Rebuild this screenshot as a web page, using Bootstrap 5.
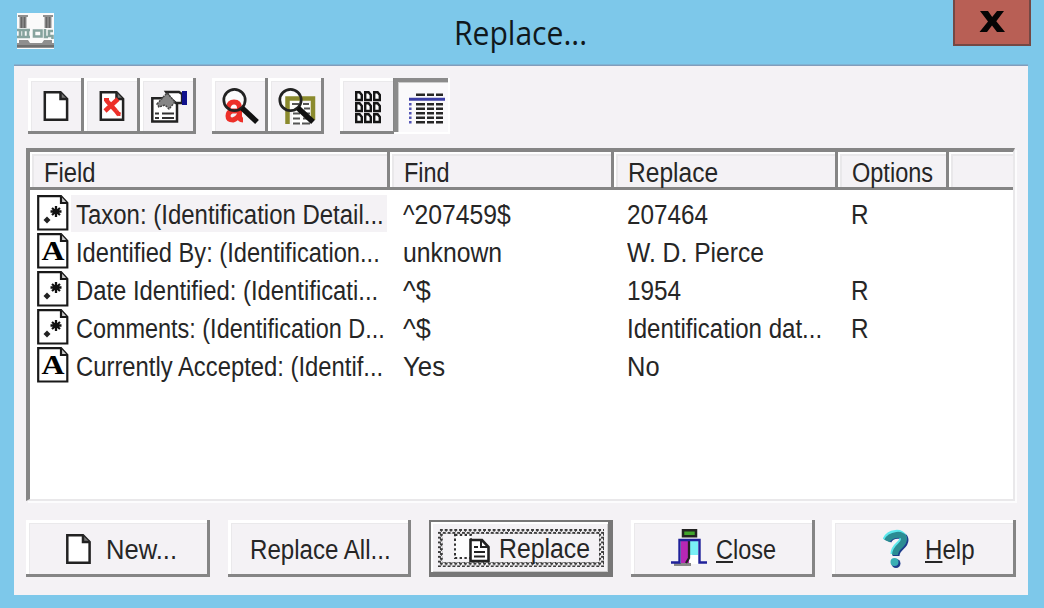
<!DOCTYPE html>
<html lang="en">
<head>
<meta charset="utf-8">
<meta name="viewport" content="width=device-width, initial-scale=1">
<title>Replace...</title>
<link href="https://cdn.jsdelivr.net/npm/bootstrap@5.3.0/dist/css/bootstrap.min.css" rel="stylesheet">
<style>
  :root { --face:#f4f2f5; --shade:#858585; --sky:#7dc8ea; }
  body { width:1044px; height:608px; overflow:hidden; background:var(--sky); font-family:"Liberation Sans",Arial,sans-serif; font-size:27px; line-height:40px; color:#262626; }
  svg { display:block; flex:none; }
  .fit { display:inline-block; white-space:nowrap; transform-origin:0 50%; }
  .fitbox { flex:none; white-space:nowrap; text-align:left; }
  .titlebar { height:66px; padding:0 13px 0 17px; }
  .logo { margin-top:13px; }
  .caption-text { font-family:"Open Sans",sans-serif; font-size:33px; line-height:44px; color:#10181c; margin:11px 0 0 400px; }
  .btn-x { width:78px; height:46px; background:#b85f55; border:2px solid #744844; border-top:0; }
  .panel { width:1014px; height:529px; margin-left:14px; background:var(--face); padding:12px 12px 0 12px; box-shadow:0 -1.5px 0 #829dbb; }
  .toolbar-row { margin-left:2px; }
  .tool, .cmd { background:var(--face); border:0; border-radius:0; padding:0; color:inherit; font-size:inherit; line-height:inherit;
    box-shadow:inset -3px -3px 0 var(--shade), inset 3px 3px 0 #fff, inset 4px 4px 0 #eae9eb; }
  .tool { width:56px; height:56px; }
  .tool.pressed { margin-left:-2px; background:#faf9fb; box-shadow:inset -2px -2px 0 #fff, inset 4px 4px 0 #8b8b8b, inset 5px 5px 0 #ccc; }
  .grid-view { width:989px; height:353px; margin-top:14px; background:#fff; border:4px solid #858585; border-right:2px solid #e9e8ea; border-bottom:2px solid #e9e8ea; box-shadow:2px 2px 0 #fcfcfd; }
  .cols { display:grid; grid-template-columns:360px 224px 224px 111px 1fr; }
  .head { margin-bottom:5px; }
  .head > div { height:38px; padding-left:14px; line-height:42px; background:var(--face); box-shadow:inset -3px -3px 0 var(--shade), inset 2px 2px 0 #fff, inset 4px 4px 0 #e9e8ea; }
  .head > div:last-child { box-shadow:inset 0 -3px 0 var(--shade), inset 2px 2px 0 #fff, inset 4px 4px 0 #e9e8ea; }
  .line > div { height:38px; padding-left:13px; }
  .line > div:first-child { padding-left:7px; }
  .name { width:316px; height:37px; margin-left:2px; padding-left:5px; }
  .name.sel { background:var(--face); }
  .cmd { width:184px; height:57px; padding-top:1px; }
  .cmd .fitbox { padding-top:2px; }
  .cmd.default { padding:9px 9px 10px; box-shadow:inset 0 0 0 2px #777, inset -5px -5px 0 #777, inset 4px 4px 0 #fff, inset -6px -6px 0 #ccc; }
  .focus-ants { width:166px; height:38px; padding:5px; background:repeating-conic-gradient(#3c3c3c 0 25%, #f4f2f5 0 50%) 0 0/4.8px 4.8px; }
  .focus-in { width:156px; height:28px; background:var(--face); }
  .cmds { gap:17.7px; margin-top:19px; }
</style>
</head>
<body>
<svg width="0" height="0" class="position-absolute">
  <defs>
    <g id="sheet"><path d="M1.300 1.300H17L23.600 8V28.700H1.300Z" fill="#fff" stroke="#222" stroke-width="2.500"/><path d="M17 1.500V8H23.500" fill="#777" stroke="#222" stroke-width="2.500"/></g>
    <g id="page"><path d="M1.200 1.200H24L30.300 8V34.500H1.200Z" fill="#fff" stroke="#191919" stroke-width="2.200"/><path d="M24 1.500V8H30" fill="#ccc" stroke="#191919" stroke-width="2.200"/></g>
    <g id="regex"><use href="#page"/><path d="M19 11V22M13.500 16.500H24.500M15 13L23 20M23 13L15 20" stroke="#111" stroke-width="2.300"/><path d="M10 21.500L13.500 25L10 28.500L6.500 25Z" fill="#222"/></g>
    <g id="lens"><circle cx="22.500" cy="22" r="10.700" fill="none" stroke="#222" stroke-width="2.700"/><path d="M30 30L45 44" stroke="#111" stroke-width="5.500"/></g>
    <g id="cell"><path d="M1.200 1.200H4.600L6.800 4V9H1.200Z" fill="#fff" stroke="#161616" stroke-width="2.400"/></g>
  </defs>
</svg>

<header class="titlebar d-flex align-items-start">
  <svg class="logo" width="37" height="36" viewBox="0 0 37 36">
    <path fill="#fafafa" d="M0 0H37V36H0z"/>
    <path fill="#8f8f8f" d="M1 2H11V4H9.500V15H2.500V4H1zM26 2H36V4H34.500V15H27.500V4H26zM2 27H11L13 30H25L27 27H35V30H37V35H0V30H2z"/>
    <path stroke="#666" stroke-width="1.500" d="M4.500 4V15M7.500 4V15M29.500 4V15M32.500 4V15M0 33H37"/>
    <path fill="none" stroke="#86a39e" stroke-width="2.600" d="M0 17H3V24H0M4 17H13M4 24H13M6.500 17V24M11 17V24M17 17.500H24.500V23.500H17ZM28 16V24H31M36 18H32V23H35.500V26"/>
  </svg>
  <div class="caption-text fitbox" data-box="133"><span class="fit" data-w="133">Replace...</span></div>
  <button class="btn-x ms-auto p-0" aria-label="Close window"><svg width="74" height="42" viewBox="0 0 74 42"><path d="M25 10H33L37.200 16L42 10H49L41.300 20.200L50 31H42L37 24.500L32 31H24.500L33 20.500Z" fill="#050505"/></svg></button>
</header>

<main class="panel">
  <div class="toolbar-row d-flex gap-3">
    <div class="d-flex">
      <button class="tool"><svg width="56" height="56"><use href="#sheet" x="15.500" y="13"/></svg></button>
      <button class="tool"><svg width="56" height="56"><use href="#sheet" x="15.500" y="13"/><path d="M22 22L32 33M34 21L21 33M32 33L35 37" stroke="#ed3029" stroke-width="4.500" fill="none"/><path d="M20 20H25V23H20zM35 34H36.500V38H34z" fill="#ed3029"/></svg></button>
      <button class="tool"><svg width="56" height="56">
        <path d="M12.300 20.300H37V43.500H12.300Z" fill="#fff" stroke="#222" stroke-width="2.500"/>
        <path d="M15 35.500H19M15 40H19M22 35.500H34M22 40H34" stroke="#333" stroke-width="2"/>
        <path d="M26 14H39L42 16V25H36L31 21Z" fill="#fff" stroke="#222" stroke-width="2.300"/>
        <path d="M17 26L27 15L35 24L29 31L25 27L19 29Z" fill="#858585" stroke="#444" stroke-width="1.500" stroke-dasharray="2 1"/>
        <path d="M42 13H47V27H42Z" fill="#10128c"/></svg></button>
    </div>
    <div class="d-flex">
      <button class="tool"><svg width="56" height="56"><circle cx="22.500" cy="22" r="10" fill="#fcfcfc"/><path d="M16 30Q17 24 22 24Q27.500 24 27.500 30V38Q27.500 42 31 42M27 33H20Q16 34 16 38Q16 42 21 42Q25 41 27 37" fill="none" stroke="#ed3029" stroke-width="5"/><use href="#lens"/></svg></button>
      <button class="tool"><svg width="56" height="56">
        <path d="M24 25H42V46H24Z" fill="#fff"/><circle cx="22.500" cy="22" r="10" fill="#fcfcfc"/>
        <path d="M19.500 46V20.500H45V42" fill="none" stroke="#8b8a2d" stroke-width="4.500"/>
        <path d="M24 26H31M35 26H41M36 30.500H42M25 35.500H32M37 35.500H42M25 40.500H32M35 40.500H39M25 45.500H32M34 45.500H42" stroke="#555" stroke-width="2"/><use href="#lens"/></svg></button>
    </div>
    <div class="d-flex">
      <button class="tool"><svg width="56" height="56">
        <use href="#cell" x="15" y="13"/><use href="#cell" x="24" y="13"/><use href="#cell" x="33" y="13"/>
        <use href="#cell" x="15" y="24"/><use href="#cell" x="24" y="24"/><use href="#cell" x="33" y="24"/>
        <use href="#cell" x="15" y="35"/><use href="#cell" x="24" y="35"/><use href="#cell" x="33" y="35"/></svg></button>
      <button class="tool pressed"><svg width="56" height="56">
        <path d="M22 16.800H31M33 16.800H40M42 16.800H49M22 26.200H31M33 26.200H40M42 26.200H49M22 30.700H31M33 30.700H40M42 30.700H49M22 35.200H31M33 35.200H40M42 35.200H49M22 39.700H31M33 39.700H40M42 39.700H49M22 44.200H31M33 44.200H40M42 44.200H49" stroke="#262626" stroke-width="2.500"/>
        <path d="M15 21.300H51" stroke="#3b3da4" stroke-width="3"/><path d="M16.300 25V46" stroke="#5052b4" stroke-width="2.500" stroke-dasharray="2.600 1.900"/></svg></button>
    </div>
  </div>

  <section class="grid-view">
    <div class="cols head">
      <div><span class="fit" data-w="52">Field</span></div><div><span class="fit" data-w="46">Find</span></div><div><span class="fit" data-w="90">Replace</span></div><div><span class="fit" data-w="81">Options</span></div><div></div>
    </div>
    <div class="cols line">
      <div class="d-flex"><svg width="32" height="36"><use href="#regex"/></svg><div class="name sel"><span class="fit" data-w="308">Taxon: (Identification Detail...</span></div></div>
      <div><span class="fit" data-w="108">^207459$</span></div><div><span class="fit" data-w="81">207464</span></div><div><span class="fit" data-w="18">R</span></div>
    </div>
    <div class="cols line">
      <div class="d-flex"><svg width="32" height="36"><use href="#page"/><text x="4.500" y="27" textLength="23" lengthAdjust="spacingAndGlyphs" font-family="Liberation Serif,serif" font-weight="700" font-size="28">A</text></svg><div class="name"><span class="fit" data-w="304">Identified By: (Identification...</span></div></div>
      <div><span class="fit" data-w="99">unknown</span></div><div><span class="fit" data-w="137">W. D. Pierce</span></div>
    </div>
    <div class="cols line">
      <div class="d-flex"><svg width="32" height="36"><use href="#regex"/></svg><div class="name"><span class="fit" data-w="302">Date Identified: (Identificati...</span></div></div>
      <div><span class="fit" data-w="28">^$</span></div><div><span class="fit" data-w="54">1954</span></div><div><span class="fit" data-w="18">R</span></div>
    </div>
    <div class="cols line">
      <div class="d-flex"><svg width="32" height="36"><use href="#regex"/></svg><div class="name"><span class="fit" data-w="309">Comments: (Identification D...</span></div></div>
      <div><span class="fit" data-w="28">^$</span></div><div><span class="fit" data-w="195">Identification dat...</span></div><div><span class="fit" data-w="18">R</span></div>
    </div>
    <div class="cols line">
      <div class="d-flex"><svg width="32" height="36"><use href="#page"/><text x="4.500" y="27" textLength="23" lengthAdjust="spacingAndGlyphs" font-family="Liberation Serif,serif" font-weight="700" font-size="28">A</text></svg><div class="name"><span class="fit" data-w="307">Currently Accepted: (Identif...</span></div></div>
      <div><span class="fit" data-w="42">Yes</span></div><div><span class="fit" data-w="33">No</span></div>
    </div>
  </section>

  <footer class="cmds d-flex">
    <button class="cmd d-flex align-items-center"><svg width="25" height="30" style="margin:-1px 15px 0 40px"><use href="#sheet"/></svg><span class="fitbox" data-box="71"><span class="fit" data-w="71">New...</span></span></button>
    <button class="cmd d-flex align-items-center" style="padding-left:22px"><span class="fitbox" data-box="141"><span class="fit" data-w="141">Replace All...</span></span></button>
    <button class="cmd default"><div class="focus-ants"><div class="focus-in d-flex align-items-center">
      <svg width="38" height="32" style="margin:-2px 7px -2px 11px"><path d="M1 3H17V26H1Z" fill="#fcfcfd" stroke="#333" stroke-width="2" stroke-dasharray="2.400 2.400"/><path d="M16.500 8H28L34.500 15V29H16.500Z" fill="#fff" stroke="#222" stroke-width="2.600"/><path d="M27 8V15H34M20 15H24M20 20H31M20 24.500H31" fill="none" stroke="#222" stroke-width="2"/></svg>
      <span class="fitbox" data-box="91"><span class="fit" data-w="91">Replace</span></span></div></div></button>
    <button class="cmd d-flex align-items-center"><svg width="37" height="38" style="margin:-3px 8px 0 40px">
      <path d="M12 1.200H25V7.200H12Z" fill="#41a52c" stroke="#222" stroke-width="2.500"/>
      <path d="M10 12H18V34H10Z" fill="#b727b4"/><path d="M19 12H27V26H19Z" fill="#79eff5"/><path d="M19 26H27V35H19Z" fill="#fff"/>
      <path d="M3 35.500H20" stroke="#888" stroke-width="3"/><path d="M18 12V29L15 34" fill="none" stroke="#222" stroke-width="2.300"/>
      <path d="M0 33.500H8.500V11H28.500V33.500H36" fill="none" stroke="#20229a" stroke-width="2.400"/></svg><span class="fitbox" data-box="60"><span class="fit" data-w="60"><u>C</u>lose</span></span></button>
    <button class="cmd d-flex align-items-center"><svg width="28" height="40" style="margin:0 14px 0 51px">
      <g fill="none" stroke-width="7"><path d="M5 12C8 5 22 4 22 11C22 18 13 18 13 27" stroke="#1d3c8c"/><path d="M3 11C6 3 20 2 20 9C20 16 11 16 11 25" stroke="#5ce8ec"/><path d="M4 12C7 5 21 3.500 21 10C21 17 12 17 12 26" stroke="#2b8c93" stroke-width="6"/></g>
      <circle cx="13" cy="34.500" r="4.500" fill="#1d3c8c"/><circle cx="11.500" cy="33" r="4" fill="#3aaeb4"/></svg><span class="fitbox" data-box="50"><span class="fit" data-w="50"><u>H</u>elp</span></span></button>
  </footer>
</main>

<script src="https://cdn.jsdelivr.net/npm/bootstrap@5.3.0/dist/js/bootstrap.bundle.min.js"></script>
<script>
  document.querySelectorAll('.fitbox').forEach(b => { b.style.width = b.dataset.box + 'px'; });
  document.querySelectorAll('.fit').forEach(t => { t.style.transform = `scaleX(${t.dataset.w / t.offsetWidth})`; });
</script>
</body>
</html>
